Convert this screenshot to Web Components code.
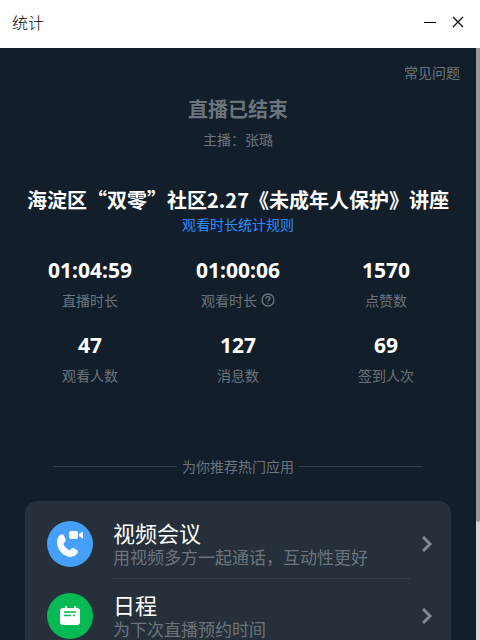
<!DOCTYPE html>
<html lang="zh-CN">
<head>
<meta charset="utf-8">
<meta name="viewport" content="width=device-width, initial-scale=1">
<title>统计</title>
<style>
    body {
        margin: 0;
        font-family: "Noto Sans CJK SC", "Noto Sans", sans-serif;
        --bg: #121f2b;
        --card: #25303b;
        --muted: #6b747b;
        --rule: #323e49;
    }
</style>
</head>
<body>

<live-window caption="统计">
    <live-summary status="直播已结束" host="主播：张璐"
        heading="海淀区“双零”社区2.27《未成年人保护》讲座">
        <live-stat value="01:04:59" label="直播时长"></live-stat>
        <live-stat value="01:00:06" label="观看时长" help></live-stat>
        <live-stat value="1570" label="点赞数"></live-stat>
        <live-stat value="47" label="观看人数"></live-stat>
        <live-stat value="127" label="消息数"></live-stat>
        <live-stat value="69" label="签到人次"></live-stat>
    </live-summary>
    <app-list caption="为你推荐热门应用">
        <app-item name="视频会议" desc="用视频多方一起通话，互动性更好">
            <svg slot="icon" width="46" height="46" viewBox="0 0 46 46" aria-hidden="true">
                <circle cx="23" cy="23" r="23" fill="#46a0fa"/>
                <path fill="#fff" d="M13.2 14c1.4-1.2 3.2-.7 3.9.9l1.4 3.3c.5 1.2.1 2.2-.9 3l-.7.6c-.6.5-.6 1.1-.3 1.8 1.2 2.500 2.600 4 5 5.400.7.4 1.300.3 1.800-.2l.9-1c.7-.8 1.600-1 2.600-.5l2.700 1.500c1.500.9 1.800 2.500.6 3.800-3 3.500-7.500 4.300-11.700 2C14.100 32.200 11 28.200 10.200 23.200c-.6-3.700.3-7 3-9.200z"/>
                <rect x="22" y="10" width="9" height="8" rx="2" fill="#fff"/>
                <path fill="#fff" d="M32 13l3-2q1-.5 1 .5v5q0 1-1 .5l-3-2z"/>
            </svg>
        </app-item>
        <app-item name="日程" desc="为下次直播预约时间">
            <svg slot="icon" width="46" height="46" viewBox="0 0 46 46" aria-hidden="true">
                <circle cx="23" cy="23" r="23" fill="#06b955"/>
                <rect x="13" y="15" width="20" height="17" rx="3" fill="#fff"/>
                <path stroke="#fff" stroke-width="2" stroke-linecap="round" d="M19 14v2M28 14v2"/>
                <path stroke="#06b955" stroke-width="1.500" d="M17 19h12M17 22.500h7M26 22.500h2"/>
            </svg>
        </app-item>
    </app-list>
</live-window>

<script>
// Creates the shadow root for el and fills it with html
function render(el, html) {
    el.attachShadow({ mode: 'open' }).innerHTML = html;
}

// class LiveWindow: title bar, scrolled content and its scroll rail

class LiveWindow extends HTMLElement
{
    connectedCallback() {
        render(this, `
            <style>
            :host {
                display: flex;
                flex-flow: column nowrap;
                height: 100vh;
                background: var(--bg);
            }

            header {
                flex: none;
                box-sizing: border-box;
                height: 48px;
                padding: 0 14px 4px 12px;
                display: flex;
                align-items: center;
                gap: 12px;
                background: #fff;
                color: #000;
            }

            h1 {
                flex: 1;
                margin: 0;
                font-size: 16px;
                line-height: 24px;
                font-weight: 300;
            }

            button {
                width: 16px;
                height: 16px;
                padding: 0;
                border: 0;
                background: none;
                color: inherit;
            }

            button svg { display: block; }

            .view {
                flex: 1;
                min-height: 0;
                display: flex;
            }

            main {
                flex: 1;
                min-width: 0;
                overflow: hidden;
            }

            .rail {
                width: 4px;
                background: #d8d8d8;
            }

            .thumb {
                height: 80%;
                border-radius: 0 0 2px 2px;
                background: #999;
            }
            </style>
            <header>
                <h1>${this.getAttribute('caption')}</h1>
                <button type="button" aria-label="最小化">
                    <svg width="16" height="16" viewBox="0 0 16 16"><path d="M2 8.500h12" stroke="currentColor"/></svg>
                </button>
                <button type="button" aria-label="关闭">
                    <svg width="16" height="16" viewBox="0 0 16 16"><path d="M3 3l10 10M13 3L3 13" stroke="currentColor" stroke-width="1.200"/></svg>
                </button>
            </header>
            <div class="view">
                <main><slot></slot></main>
                <div class="rail"><div class="thumb"></div></div>
            </div>
        `);
    }
}

// class LiveSummary: status of the broadcast above a grid of live-stat

class LiveSummary extends HTMLElement
{
    connectedCallback() {
        render(this, `
            <style>
            :host {
                display: block;
                padding: 14px 16px 0;
                text-align: center;
                font-size: 14px;
                line-height: 20px;
                color: var(--muted);
            }

            a {
                color: inherit;
                text-decoration: none;
            }

            .faq { text-align: right; }

            h2, h3 {
                margin: 0;
                font-size: 20px;
                line-height: 28px;
                font-weight: bold;
            }

            h2 { margin-top: 13px; }

            h3 {
                margin: 37px -8px 0;
                color: #fff;
            }

            p { margin: 6px 0 0; }

            .rules { color: #2f8cff; }

            .stats {
                margin-top: 22px;
                display: grid;
                grid-template-columns: repeat(3, 1fr);
                row-gap: 21px;
            }
            </style>
            <div class="faq"><a href="#faq">常见问题</a></div>
            <h2>${this.getAttribute('status')}</h2>
            <p>${this.getAttribute('host')}</p>
            <h3>${this.getAttribute('heading')}</h3>
            <a class="rules" href="#rules">观看时长统计规则</a>
            <div class="stats"><slot></slot></div>
        `);
    }
}

// class LiveStat: one figure with its label, and a help button if "help" is set

const HELP_HTML = `
    <button type="button" aria-label="说明">
        <svg width="14" height="14" viewBox="0 0 14 14" fill="none" stroke="currentColor" stroke-width="1.400">
            <circle cx="7" cy="7" r="6"/>
            <path d="M5 5.700C5 3 9 3 9 5.600 9 6.900 7 6.900 7 8.500M7 9.400v1.400"/>
        </svg>
    </button>
`;

class LiveStat extends HTMLElement
{
    connectedCallback() {
        render(this, `
            <style>
            :host {
                display: flex;
                flex-flow: column nowrap;
                align-items: center;
                gap: 6px;
            }

            .value {
                font: bold 21px/28px "Noto Sans", "Open Sans", sans-serif;
                color: #fff;
            }

            .label {
                display: flex;
                align-items: center;
                gap: 4px;
            }

            button {
                padding: 0;
                border: 0;
                background: none;
                color: inherit;
            }

            button svg { display: block; }
            </style>
            <div class="value">${this.getAttribute('value')}</div>
            <div class="label">
                <span>${this.getAttribute('label')}</span>
                ${this.hasAttribute('help') ? HELP_HTML : ''}
            </div>
        `);
    }
}

// class AppList: captioned rule and the card that holds app-item

class AppList extends HTMLElement
{
    connectedCallback() {
        render(this, `
            <style>
            :host {
                display: block;
                padding: 71px 25px 0;
            }

            .caption {
                margin: 0 28px;
                display: flex;
                align-items: center;
                gap: 5px;
                font-size: 14px;
                line-height: 20px;
                color: var(--muted);
            }

            .caption::before, .caption::after {
                content: "";
                flex: 1;
                height: 1px;
                background: var(--rule);
            }

            .card {
                margin-top: 25px;
                padding: 6px 18px 6px 22px;
                border-radius: 12px;
                background: var(--card);
            }
            </style>
            <div class="caption">${this.getAttribute('caption')}</div>
            <div class="card"><slot></slot></div>
        `);
    }
}

// class AppItem: a row of the card, the logo is passed in as slot "icon"

class AppItem extends HTMLElement
{
    connectedCallback() {
        render(this, `
            <style>
            :host { display: block; }

            a {
                display: flex;
                align-items: flex-start;
                padding-top: 14px;
                color: #fff;
                text-decoration: none;
            }

            ::slotted(svg) {
                flex: none;
                margin-right: 20px;
            }

            .body {
                flex: 1;
                min-width: 0;
                padding-bottom: 9px;
                border-bottom: 1px solid var(--rule);
                display: flex;
                flex-flow: column nowrap;
                gap: 2px;
            }

            .name {
                font-size: 22px;
                line-height: 22px;
            }

            .desc {
                font-size: 17px;
                line-height: 24px;
                color: var(--muted);
            }

            .chevron {
                flex: none;
                margin: 15px 0 0 11px;
                color: #80888d;
            }
            </style>
            <a href="#">
                <slot name="icon"></slot>
                <span class="body">
                    <span class="name">${this.getAttribute('name')}</span>
                    <span class="desc">${this.getAttribute('desc')}</span>
                </span>
                <svg class="chevron" width="12" height="16" viewBox="0 0 12 16" fill="none" stroke="currentColor" stroke-width="3">
                    <path d="M2 1l7 7-7 7"/>
                </svg>
            </a>
        `);
    }
}

customElements.define('live-window', LiveWindow);
customElements.define('live-summary', LiveSummary);
customElements.define('live-stat', LiveStat);
customElements.define('app-list', AppList);
customElements.define('app-item', AppItem);
</script>
</body>
</html>
